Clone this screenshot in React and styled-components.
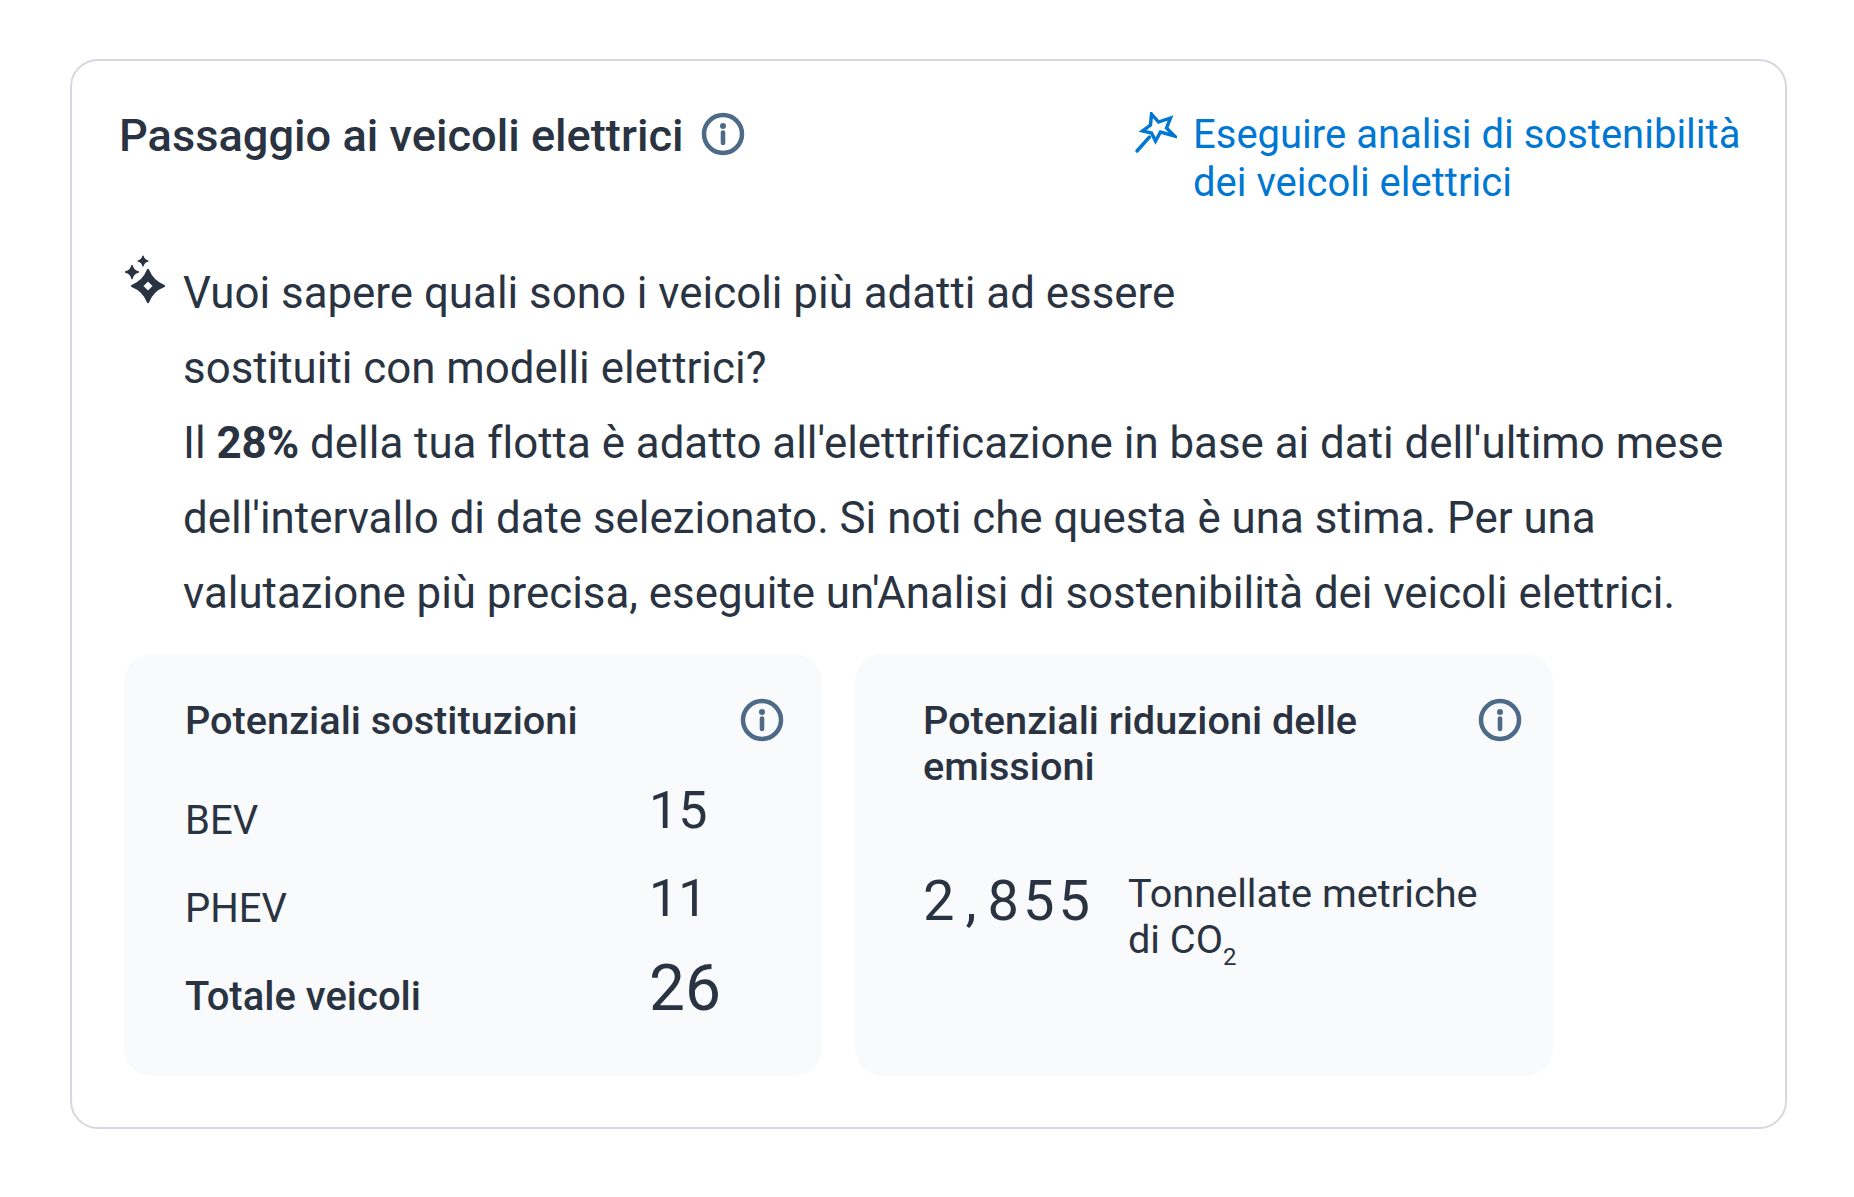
import React from "react";
import styled, { createGlobalStyle } from "styled-components";

const Global = createGlobalStyle`
  html, body {
    margin: 0;
    background: #fff;
  }
  body {
    font-family: Roboto, "Liberation Sans", sans-serif;
    font-variant-ligatures: none;
    color: #2a3341;
  }
`;

const Page = styled.div`
  padding: 59px 60px 0 70px;
`;

const Card = styled.section`
  box-sizing: border-box;
  width: 1717px;
  height: 1070px;
  border: 2px solid #d5d8de;
  border-radius: 28px;
  padding: 48px 46px 0 47px;
`;

const Head = styled.div`
  display: flex;
  justify-content: space-between;
  align-items: flex-start;
`;

const TitleRow = styled.div`
  display: flex;
  align-items: flex-start;
  gap: 17px;
  svg {
    margin-top: 3px;
  }
`;

const Title = styled.h2`
  margin: 0;
  padding-top: 1px;
  font-size: 45.2px;
  line-height: 52px;
  font-weight: 500;
`;

const RunLink = styled.a`
  display: flex;
  gap: 16px;
  width: 605px;
  padding-top: 2px;
  color: #0078d3;
  font-size: 40px;
  line-height: 47.5px;
  white-space: nowrap;
  svg {
    margin-top: 1px;
  }
`;

const Insight = styled.div`
  display: flex;
  margin-top: 41px;
  padding-left: 6px;
`;

const SparkleBox = styled.div`
  flex: none;
  width: 58px;
  padding-top: 7px;
`;

const Copy = styled.div`
  padding-top: 9px;
`;

const Para = styled.p`
  margin: 0;
  font-size: 43.85px;
  line-height: 75px;
  max-width: ${(p) => p.$max}px;
`;

const Panels = styled.div`
  display: flex;
  gap: 33px;
  margin-top: 23px;
  padding-left: 5px;
`;

const Panel = styled.div`
  box-sizing: border-box;
  width: 698px;
  height: 422px;
  background: #f9fafc;
  border-radius: 28px;
  padding: 44px ${(p) => p.$right}px 0 ${(p) => p.$left}px;
`;

const PanelHead = styled.div`
  display: flex;
  justify-content: space-between;
  align-items: flex-start;
`;

const PanelTitle = styled.h3`
  margin: 0;
  width: 480px;
  font-size: 39.7px;
  line-height: 46px;
  font-weight: 500;
`;

const Rows = styled.div`
  display: grid;
  grid-template-columns: 464px auto;
  grid-auto-rows: 88px;
  margin-top: 20px;
  align-items: end;
`;

const RowLabel = styled.div`
  font-size: 40px;
  line-height: 46px;
  font-weight: ${(p) => (p.$total ? 500 : 400)};
  padding-bottom: 8px;
`;

const RowValue = styled.div`
  font-size: ${(p) => (p.$total ? 64 : 52)}px;
  line-height: ${(p) => (p.$total ? 76 : 64)}px;
  padding-bottom: ${(p) => (p.$total ? 1 : 9)}px;
`;

const Emission = styled.div`
  display: flex;
  gap: 34px;
  margin-top: 75px;
`;

const EmissionValue = styled.div`
  font-size: 56px;
  line-height: 72px;
  letter-spacing: 4px;
`;

const Comma = styled.span`
  margin: 0 7px;
`;

const EmissionUnit = styled.div`
  width: 370px;
  padding-top: 6px;
  font-size: 39.7px;
  line-height: 46px;
  sub {
    font-size: 24px;
    line-height: 0;
    vertical-align: -12px;
  }
`;

const IconSvg = styled.svg`
  flex: none;
  display: block;
`;

const InfoIcon = ({ size = 44 }) => (
  <IconSvg width={size} height={size} viewBox="0 0 44 44" fill="none">
    <circle cx="22" cy="22" r="19" stroke="#4d6a87" strokeWidth="4.5" />
    <circle cx="22" cy="14" r="3" fill="#4d6a87" />
    <path d="M22 20.500V31" stroke="#4d6a87" strokeWidth="4.600" strokeLinecap="round" />
  </IconSvg>
);

const WandIcon = () => (
  <IconSvg width="43" height="42" viewBox="0 0 42 42" fill="none" stroke="#0078d3" strokeWidth="3.400" strokeLinejoin="miter" strokeLinecap="round">
    <path d="M17 2L24 10L36 6L32 16L40 24L26 20L21 29L17 21L8 19L16 13Z" />
    <path d="M15 25L2.500 39" />
  </IconSvg>
);

// four pointed star with concave sides
const star = (cx, cy, r, k) =>
  `M${cx} ${cy - r}Q${cx + k} ${cy - k} ${cx + r} ${cy}Q${cx + k} ${cy + k} ${cx} ${cy + r}Q${cx - k} ${cy + k} ${cx - r} ${cy}Q${cx - k} ${cy - k} ${cx} ${cy - r}Z`;

const SparkleIcon = () => (
  <IconSvg width="42" height="52" viewBox="0 0 42 52" fill="#2a3341" stroke="#2a3341" strokeWidth="2.200" strokeLinejoin="round">
    <path fillRule="evenodd" d={`${star(23, 32, 16, 4.500)}M23 26L17 32L23 38L29 32Z`} />
    <path strokeWidth="1.400" d={star(7, 18, 6.500, 1.200)} />
    <path strokeWidth="1.200" d={star(18, 7, 5, 1)} />
  </IconSvg>
);

const stats = [
  { label: "BEV", value: "15" },
  { label: "PHEV", value: "11" },
  { label: "Totale veicoli", value: "26", total: true },
];

const App = () => {
  return (
    <Page>
      <Global />
      <Card>
        <Head>
          <TitleRow>
            <Title>Passaggio ai veicoli elettrici</Title>
            <InfoIcon />
          </TitleRow>
          <RunLink>
            <WandIcon />
            <span>
              Eseguire analisi di sostenibilità
              <br />
              dei veicoli elettrici
            </span>
          </RunLink>
        </Head>
        <Insight>
          <SparkleBox>
            <SparkleIcon />
          </SparkleBox>
          <Copy>
            <Para $max={1020}>
              Vuoi sapere quali sono i veicoli più adatti ad essere sostituiti con modelli elettrici?
            </Para>
            <Para $max={1570}>
              Il <b>28%</b> della tua flotta è adatto all'elettrificazione in base ai dati dell'ultimo mese
              dell'intervallo di date selezionato. Si noti che questa è una stima. Per una valutazione più
              precisa, eseguite un'Analisi di sostenibilità dei veicoli elettrici.
            </Para>
          </Copy>
        </Insight>
        <Panels>
          <Panel $left={61} $right={38}>
            <PanelHead>
              <PanelTitle>Potenziali sostituzioni</PanelTitle>
              <InfoIcon />
            </PanelHead>
            <Rows>
              {stats.map((s) => (
                <React.Fragment key={s.label}>
                  <RowLabel $total={s.total}>{s.label}</RowLabel>
                  <RowValue $total={s.total}>{s.value}</RowValue>
                </React.Fragment>
              ))}
            </Rows>
          </Panel>
          <Panel $left={68} $right={31}>
            <PanelHead>
              <PanelTitle>Potenziali riduzioni delle emissioni</PanelTitle>
              <InfoIcon />
            </PanelHead>
            <Emission>
              <EmissionValue>
                2<Comma>,</Comma>855
              </EmissionValue>
              <EmissionUnit>
                Tonnellate metriche di CO<sub>2</sub>
              </EmissionUnit>
            </Emission>
          </Panel>
        </Panels>
      </Card>
    </Page>
  );
};

export default App;
